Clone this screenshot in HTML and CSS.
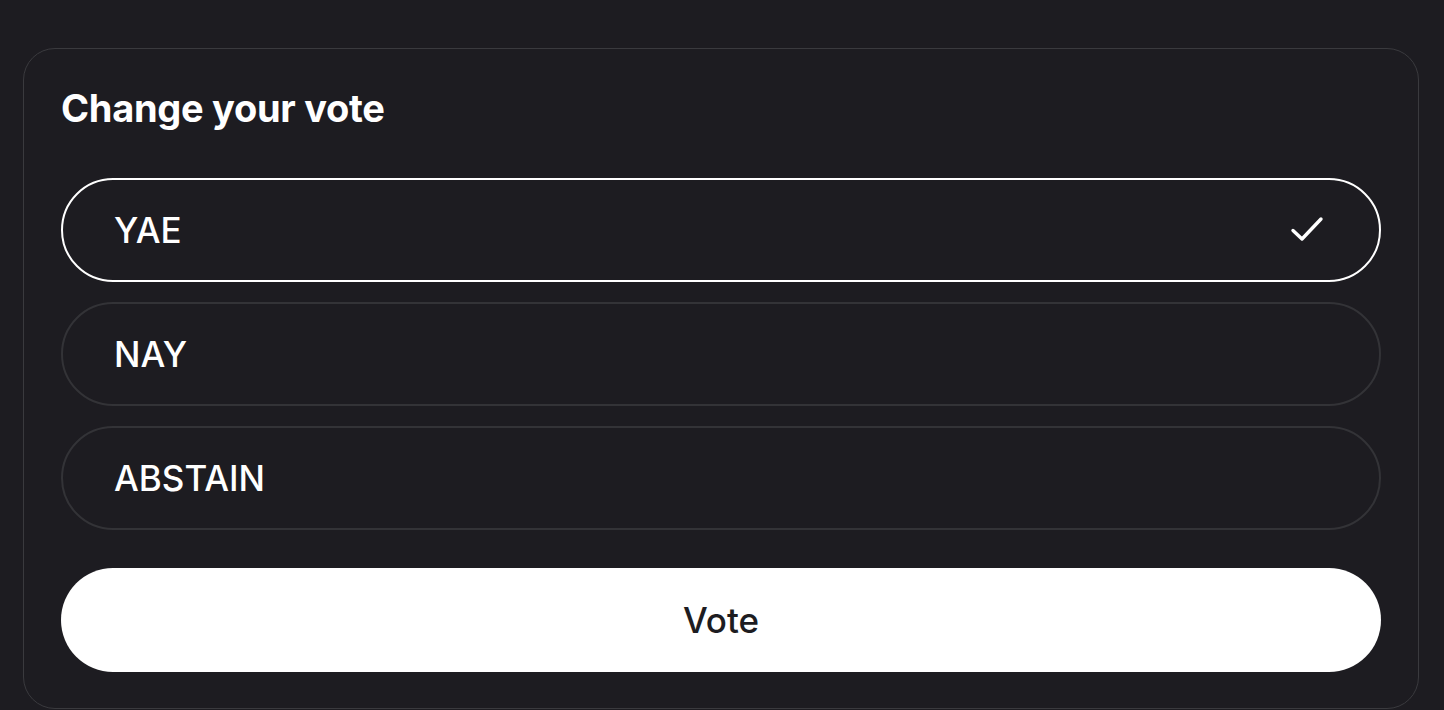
FILE: index.html
```html
<!DOCTYPE html>
<html lang="en">
<head>
<meta charset="utf-8">
<title>Change your vote</title>
<link rel="stylesheet" href="styles.css">
</head>
<body>
<div class="page">
  <section class="card">
    <h2 class="title">Change your vote</h2>
    <div class="options">
      <button class="option option--selected" type="button">
        <span class="option-label">YAE</span>
        <svg class="check" width="36" height="30" viewBox="0 0 36 30" aria-hidden="true">
          <path d="M4 15.5 L13 24 L32 4" fill="none" stroke="#ffffff" stroke-width="3.4" stroke-linecap="round" stroke-linejoin="round"/>
        </svg>
      </button>
      <button class="option" type="button">
        <span class="option-label">NAY</span>
      </button>
      <button class="option" type="button">
        <span class="option-label">ABSTAIN</span>
      </button>
    </div>
    <button class="vote" type="button">Vote</button>
  </section>
</div>
</body>
</html>
```

FILE: styles.css
```css
html, body {
  margin: 0;
  padding: 0;
  background: #1d1c21;
  height: 100%;
  overflow: hidden;
}

.page {
  padding: 48px 25px 0 23px;
  font-family: Inter, "Liberation Sans", Arial, sans-serif;
  color: #ffffff;
}

.card {
  border: 1px solid #3a3a3e;
  border-radius: 32px;
  padding: 37px 37px 36px 37px;
  display: flex;
  flex-direction: column;
}

.title {
  margin: 0;
  font-size: 38px;
  line-height: 44px;
  font-weight: 700;
  letter-spacing: -0.3px;
  color: #ffffff;
}

.options {
  margin-top: 48px;
  display: flex;
  flex-direction: column;
  gap: 20px;
}

.option {
  box-sizing: border-box;
  height: 104px;
  border-radius: 52px;
  border: 2px solid #333337;
  background: transparent;
  display: flex;
  align-items: center;
  justify-content: space-between;
  padding: 0 54px 0 51px;
  font-family: inherit;
  color: #ffffff;
  cursor: pointer;
}

.option--selected {
  border-color: #ffffff;
}

.option-label {
  font-size: 35px;
  font-weight: 500;
  letter-spacing: 0;
}

.check {
  display: block;
}

.vote {
  margin-top: 38px;
  box-sizing: border-box;
  height: 104px;
  border: none;
  border-radius: 52px;
  background: #ffffff;
  color: #1d1c21;
  font-family: inherit;
  font-size: 35px;
  font-weight: 500;
  cursor: pointer;
}
```
